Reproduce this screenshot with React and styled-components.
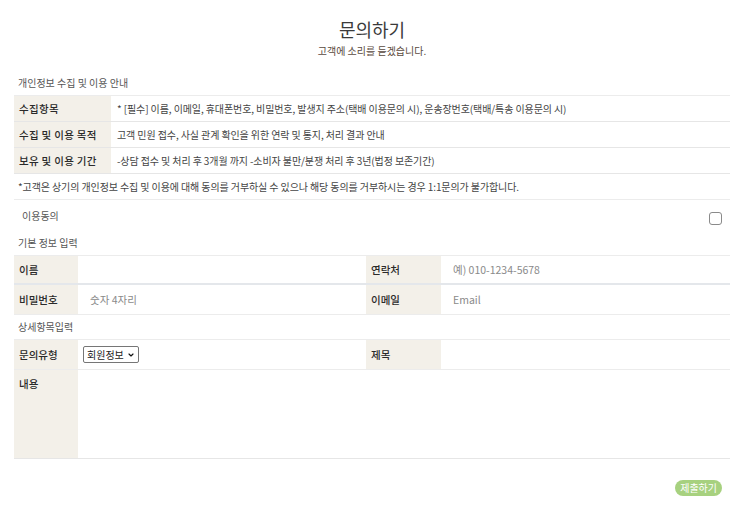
import styled, { createGlobalStyle } from 'styled-components';
import { ChevronDown } from 'lucide-react';

const GlobalStyle = createGlobalStyle`
  body {
    margin: 0;
    background: #fff;
    font-family: "Noto Sans CJK KR", "Noto Sans", sans-serif;
    color: #333;
  }
`;

const privacyRows = [
  {
    label: '수집항목',
    value: '* [필수] 이름, 이메일, 휴대폰번호, 비밀번호, 발생지 주소(택배 이용문의 시), 운송장번호(택배/특송 이용문의 시)',
  },
  { label: '수집 및 이용 목적', value: '고객 민원 접수, 사실 관계 확인을 위한 연락 및 통지, 처리 결과 안내' },
  { label: '보유 및 이용 기간', value: '-상담 접수 및 처리 후 3개월 까지 -소비자 불만/분쟁 처리 후 3년(법정 보존기간)' },
];

export default function App() {
  return (
    <>
      <GlobalStyle />
      <Page>
        <Header>
          <Title>문의하기</Title>
          <Subtitle>고객에 소리를 듣겠습니다.</Subtitle>
        </Header>

        <SectionTitle>개인정보 수집 및 이용 안내</SectionTitle>
        <InfoTable>
          {privacyRows.map((row) => (
            <InfoRow key={row.label}>
              <InfoLabel>{row.label}</InfoLabel>
              <InfoValue>{row.value}</InfoValue>
            </InfoRow>
          ))}
        </InfoTable>
        <Notice>*고객은 상기의 개인정보 수집 및 이용에 대해 동의를 거부하실 수 있으나 해당 동의를 거부하시는 경우 1:1문의가 불가합니다.</Notice>

        <Agree>
          <span>이용동의</span>
          <CheckBox type="checkbox" />
        </Agree>

        <SectionTitle>기본 정보 입력</SectionTitle>
        <FormTable>
          <FormRow $divider>
            <Label>이름</Label>
            <Field><Input /></Field>
            <Label>연락처</Label>
            <Field><Input placeholder="예) 010-1234-5678" /></Field>
          </FormRow>
          <FormRow>
            <Label>비밀번호</Label>
            <Field><Input placeholder="숫자 4자리" /></Field>
            <Label>이메일</Label>
            <Field><Input placeholder="Email" /></Field>
          </FormRow>
        </FormTable>

        <SectionTitle>상세항목입력</SectionTitle>
        <FormTable>
          <FormRow>
            <Label>문의유형</Label>
            <Field>
              <SelectWrap>
                <Select defaultValue="member">
                  <option value="member">회원정보</option>
                  <option value="order">주문/결제</option>
                  <option value="delivery">배송</option>
                </Select>
                <SelectArrow size={8} strokeWidth={3.5} />
              </SelectWrap>
            </Field>
            <Label>제목</Label>
            <Field><Input /></Field>
          </FormRow>
          <ContentRow>
            <Label>내용</Label>
            <TextArea />
          </ContentRow>
        </FormTable>

        <Footer>
          <SubmitButton>제출하기</SubmitButton>
        </Footer>
      </Page>
    </>
  );
}

const Page = styled.div`
  padding: 0 20px 0 14px;
  font-size: 10px;
`;

const Header = styled.header`
  padding-top: 16px;
  padding-bottom: 13px;
  text-align: center;
`;

const Title = styled.h1`
  margin: 0;
  font-size: 18px;
  font-weight: 400;
  line-height: 26px;
  color: #3a3a3a;
`;

const Subtitle = styled.p`
  margin: 2px 0 0;
  font-size: 10px;
  line-height: 14px;
  color: #5a4a40;
`;

const SectionTitle = styled.h2`
  margin: 0;
  padding: 0 4px;
  font-size: 10px;
  font-weight: 400;
  line-height: 24px;
  color: #555;
`;

const InfoTable = styled.div`
  border-top: 1px solid #ececec;
`;

const InfoRow = styled.div`
  display: grid;
  grid-template-columns: 97px 1fr;
  height: 26px;
  border-bottom: 1px solid #e6e6e6;
  box-sizing: border-box;
`;

const InfoLabel = styled.div`
  display: flex;
  align-items: center;
  padding-left: 5px;
  background: #f3f0e9;
  font-size: 10.5px;
  font-weight: 500;
  color: #2a2a2a;
  letter-spacing: 0.3px;
`;

const InfoValue = styled.div`
  display: flex;
  align-items: center;
  padding-left: 6px;
  font-size: 10px;
  color: #444;
  letter-spacing: -0.1px;
  white-space: nowrap;
`;

const Notice = styled.p`
  margin: 0;
  padding: 0 4px;
  height: 25px;
  line-height: 25px;
  font-size: 10px;
  color: #444;
  letter-spacing: -0.1px;
  border-bottom: 1px solid #ececec;
  white-space: nowrap;
`;

const Agree = styled.div`
  display: flex;
  align-items: center;
  justify-content: space-between;
  height: 31px;
  padding: 0 8px 0 8px;
  color: #555;
`;

const CheckBox = styled.input`
  margin: 5px 0 0;
  width: 13px;
  height: 13px;
  appearance: none;
  border: 1px solid #8a8a8a;
  border-radius: 3px;
  background: #fff;
`;

const FormTable = styled.div`
  border-top: 1px solid #ececec;
`;

const FormRow = styled.div`
  display: grid;
  grid-template-columns: 64px 288px 75px 1fr;
  height: ${(p) => (p.$divider ? '29px' : '30px')};
  box-sizing: border-box;
  border-bottom: ${(p) => (p.$divider ? '2px solid #e4e7eb' : '1px solid #ececec')};
`;

const Label = styled.div`
  display: flex;
  align-items: center;
  padding-left: 5px;
  background: #f3f0e9;
  font-size: 10.5px;
  font-weight: 500;
  color: #2a2a2a;
`;

const Field = styled.div`
  display: flex;
  align-items: center;
`;

const Input = styled.input`
  width: 100%;
  height: 100%;
  border: 0;
  padding: 0 12px;
  box-sizing: border-box;
  font-family: inherit;
  font-size: 10.5px;
  color: #333;
  outline: none;
  background: transparent;
  &::placeholder {
    color: #8a8a8a;
  }
`;

const SelectWrap = styled.div`
  position: relative;
  margin-left: 5px;
  display: flex;
`;

const Select = styled.select`
  appearance: none;
  width: 56px;
  height: 17px;
  padding: 0 12px 0 3px;
  font-family: inherit;
  font-size: 10px;
  color: #222;
  border: 1px solid #767676;
  border-radius: 2px;
  background: #fff;
`;

const SelectArrow = styled(ChevronDown)`
  position: absolute;
  right: 4px;
  top: 5px;
  color: #111;
  pointer-events: none;
`;

const ContentRow = styled.div`
  display: grid;
  grid-template-columns: 64px 1fr;
  height: 89px;
  box-sizing: border-box;
  border-bottom: 1px solid #e6e6e6;
  & > ${Label} {
    align-items: flex-start;
    padding-top: 6px;
  }
`;

const TextArea = styled.textarea`
  border: 0;
  resize: none;
  outline: none;
  font-family: inherit;
  font-size: 10.5px;
  padding: 8px 12px;
`;

const Footer = styled.div`
  display: flex;
  justify-content: flex-end;
  padding: 21px 8px 0 0;
`;

const SubmitButton = styled.button`
  height: 16px;
  padding: 0 5px;
  border: 0;
  border-radius: 8px;
  background: #a7d17f;
  color: #fff;
  font-family: inherit;
  font-size: 10px;
  line-height: 16px;
`;
